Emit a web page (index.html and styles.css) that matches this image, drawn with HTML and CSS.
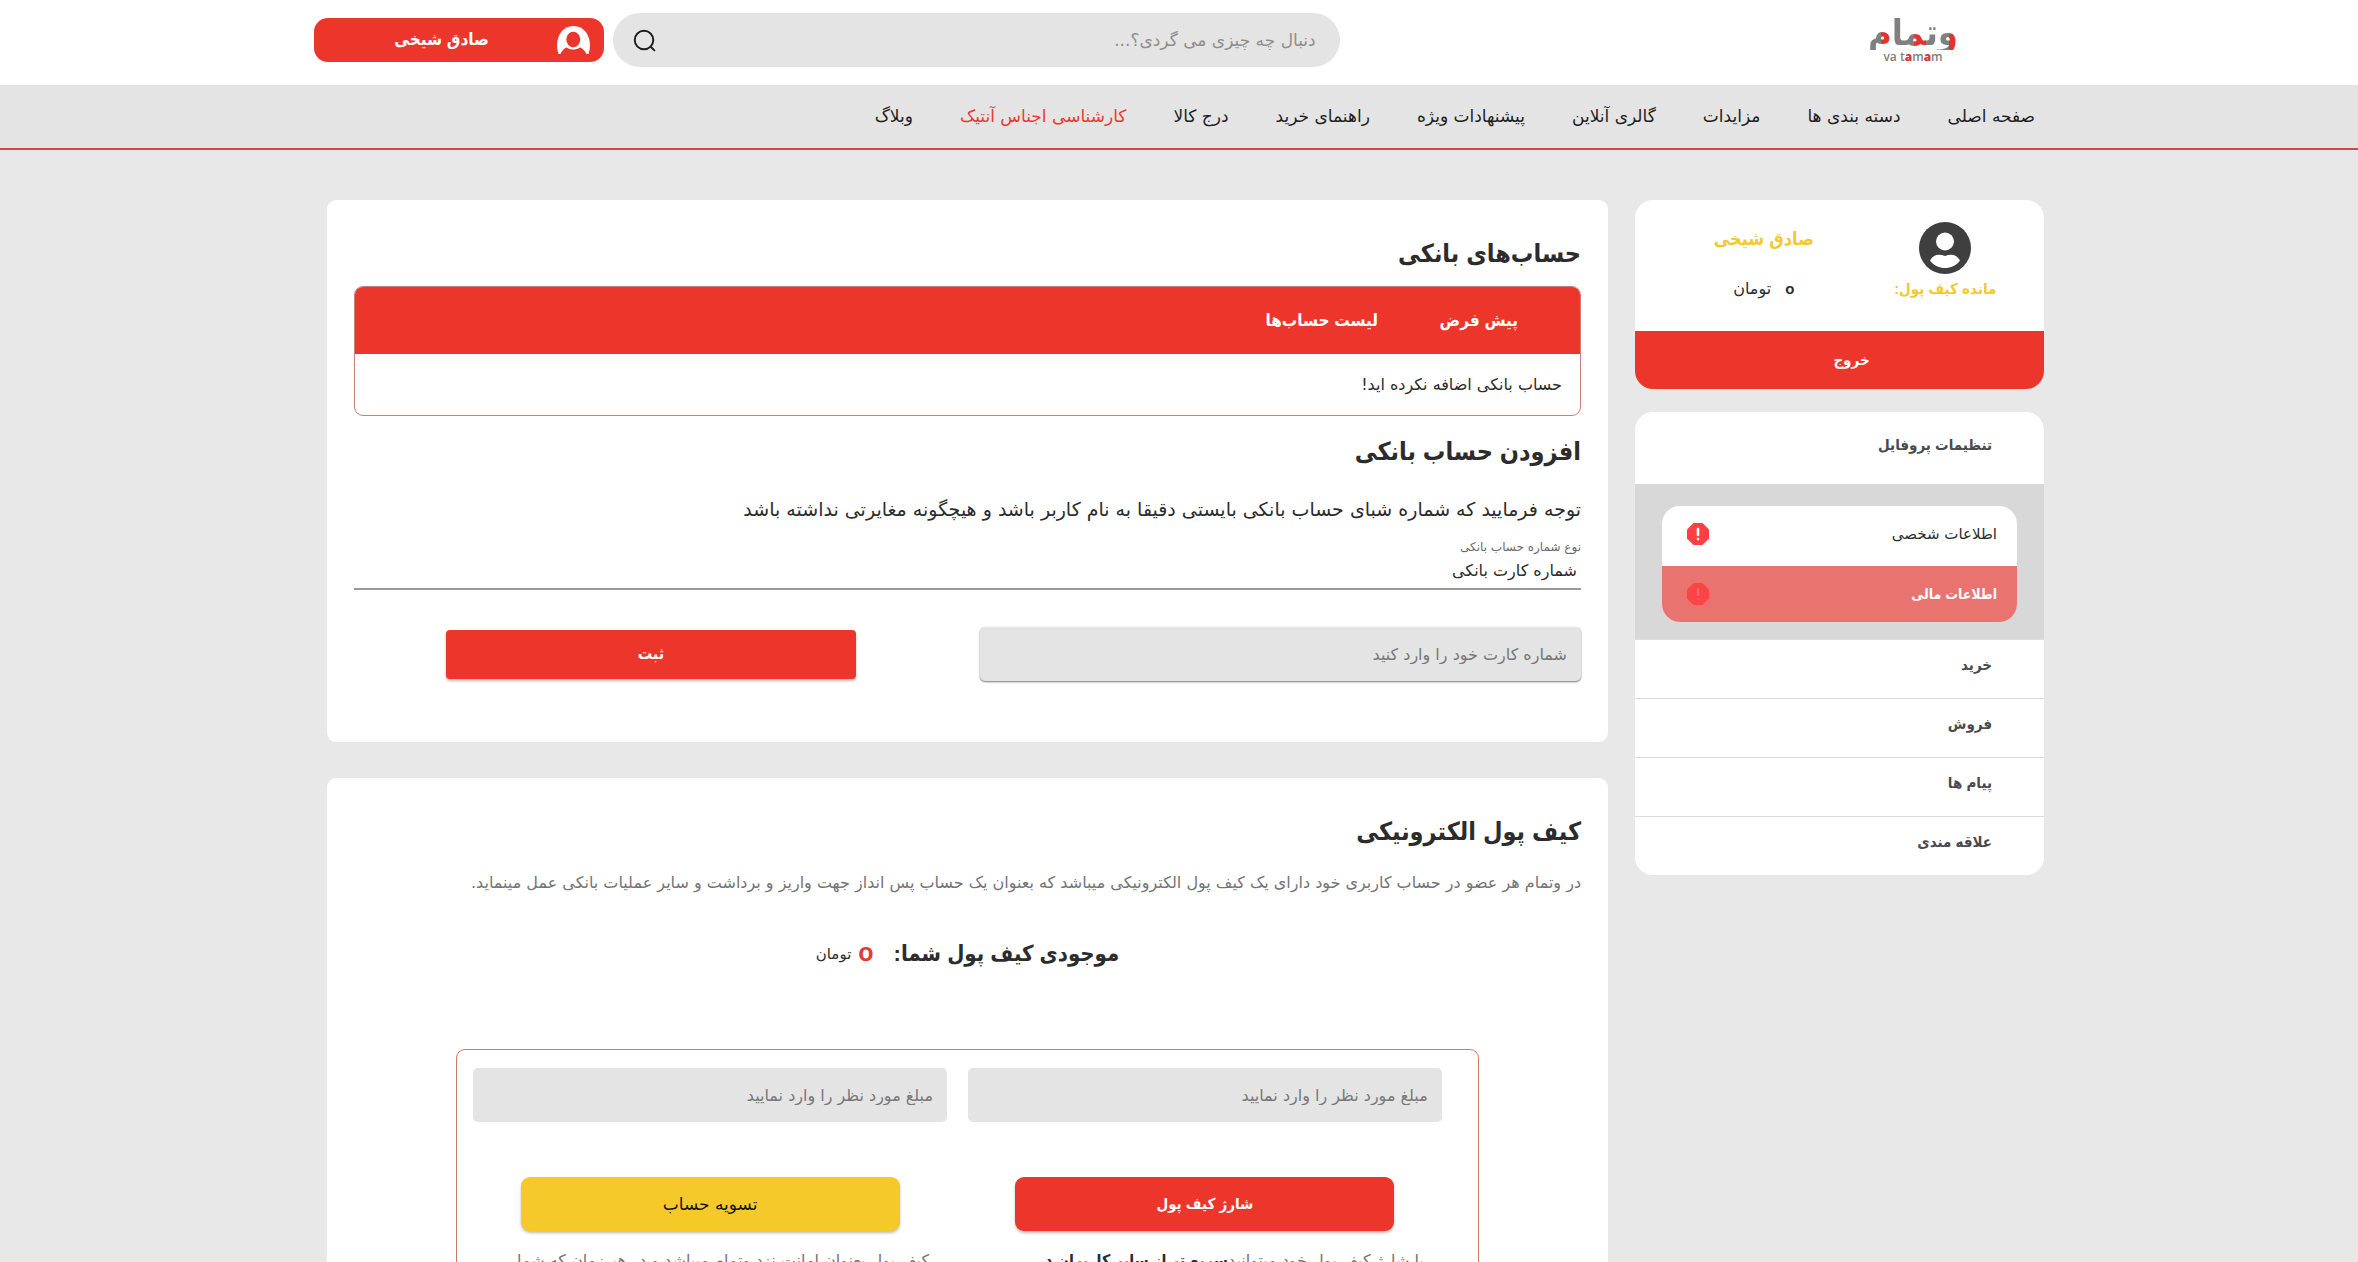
FILE: index.html
```html
<!DOCTYPE html>
<html lang="fa" dir="rtl">
<head>
<meta charset="utf-8">
<meta name="viewport" content="width=device-width, initial-scale=1">
<title>وتمام</title>
<link rel="stylesheet" href="styles.css">
</head>
<body>
<header class="topbar">
  <div class="container topbar-inner">
    <a class="logo" href="#"><span class="logo-fa">وتمام</span><span class="logo-en" dir="ltr">va t<b>a</b>m<b>a</b>m</span></a>
    <form class="search">
      <input type="search" aria-label="جستجو" placeholder="دنبال چه چیزی می گردی؟...">
      <button type="button" aria-label="جستجو"><svg viewBox="0 0 24 24"><circle cx="11.5" cy="11.5" r="9.7"/><path d="M18.5 18.5l3.8 3.8"/></svg></button>
    </form>
    <a class="account" href="#">
      <svg viewBox="0 0 35 29"><path fill="#fff" d="M2.500 28C-2 15 4 0 17.500 0S37 15 32.500 28l-2 0H4.500z"/><ellipse cx="17.300" cy="13.500" rx="7" ry="7.700" fill="#ed362b"/><path fill="#ed362b" d="M4 29C5.500 25.500 8 22 10.500 21.500c4.500 2.800 9 2.800 13.500 0C26.500 22 29.500 25.500 31 29z"/></svg>
      <span>صادق شیخی</span>
    </a>
  </div>
</header>
<nav class="nav">
  <div class="container nav-inner">
    <a href="#">صفحه اصلی</a>
    <a href="#">دسته بندی ها</a>
    <a href="#">مزایدات</a>
    <a href="#">گالری آنلاین</a>
    <a href="#">پیشنهادات ویژه</a>
    <a href="#">راهنمای خرید</a>
    <a href="#">درج کالا</a>
    <a class="hot" href="#">کارشناسی اجناس آنتیک</a>
    <a href="#">وبلاگ</a>
  </div>
</nav>
<div class="container page">
  <aside class="sidebar">
    <section class="user-card">
      <div class="user-info">
        <svg class="avatar" viewBox="0 0 52 52"><circle cx="26" cy="26" r="26" fill="#3f3f3f"/><circle cx="26" cy="19.500" r="9" fill="#fff"/><path fill="#fff" d="M11 38.500c4-6.500 9-6.500 15-4.500 6-2 11-2 15 4.500C37 44 31.500 46 26 46s-11-2-15-7.500z"/></svg>
        <strong class="user-name">صادق شیخی</strong>
        <strong class="wallet-label">مانده کیف پول:</strong>
        <span class="wallet-value"><b>o</b>تومان</span>
      </div>
      <button class="logout" type="button">خروج</button>
    </section>
    <nav class="menu" aria-label="پروفایل">
      <a class="menu-head" href="#">تنظیمات پروفایل</a>
      <div class="submenu">
        <div class="submenu-box">
          <a href="#"><span>اطلاعات شخصی</span><svg viewBox="0 0 22 22"><path fill="#ff3f42" d="M6.500 0h9L22 6.500v9L15.500 22h-9L0 15.500v-9z"/><path stroke="#fff" stroke-width="2.600" stroke-linecap="round" d="M11 6v6M11 16v.1"/></svg></a>
          <a class="active" href="#"><span>اطلاعات مالی</span><svg viewBox="0 0 22 22"><path fill="#ff4447" d="M6.500 0h9L22 6.500v9L15.500 22h-9L0 15.500v-9z"/><path stroke="#ea716c" stroke-width="2" stroke-linecap="round" d="M11 6v6M11 16v.1"/></svg></a>
        </div>
      </div>
      <a class="menu-row" href="#">خرید</a>
      <a class="menu-row" href="#">فروش</a>
      <a class="menu-row" href="#">پیام ها</a>
      <a class="menu-row" href="#">علاقه مندی</a>
    </nav>
  </aside>
  <main class="content">
    <section class="card">
      <h2>حساب‌های بانکی</h2>
      <div class="table-frame">
        <table>
          <thead><tr><th>پیش فرض</th><th>لیست حساب‌ها</th></tr></thead>
          <tbody><tr><td colspan="2">حساب بانکی اضافه نکرده اید!</td></tr></tbody>
        </table>
      </div>
      <h2 class="second">افزودن حساب بانکی</h2>
      <p class="notice">توجه فرمایید که شماره شبای حساب بانکی بایستی دقیقا به نام کاربر باشد و هیچگونه مغایرتی نداشته باشد</p>
      <div class="field">
        <label for="kind">نوع شماره حساب بانکی</label>
        <select id="kind"><option>شماره کارت بانکی</option></select>
      </div>
      <form class="add-form">
        <input class="box-input raised" type="text" aria-label="شماره کارت" placeholder="شماره کارت خود را وارد کنید">
        <div class="submit-cell"><button class="submit" type="button">ثبت</button></div>
      </form>
    </section>
    <section class="card">
      <h2>کیف پول الکترونیکی</h2>
      <p class="lead">در وتمام هر عضو در حساب کاربری خود دارای یک کیف پول الکترونیکی میباشد که بعنوان یک حساب پس انداز جهت واریز و برداشت و سایر عملیات بانکی عمل مینماید.</p>
      <p class="balance"><strong>موجودی کیف پول شما:</strong><b>o</b><span>تومان</span></p>
      <div class="wallet">
        <form class="wallet-col">
          <input class="box-input" type="text" aria-label="مبلغ شارژ" placeholder="مبلغ مورد نظر را وارد نمایید">
          <button class="wallet-btn charge" type="button">شارژ کیف پول</button>
          <p>با شارژ کیف پول خود میتوانید<strong>سریع تر از سایر کاربران در</strong></p>
        </form>
        <form class="wallet-col">
          <input class="box-input" type="text" aria-label="مبلغ تسویه" placeholder="مبلغ مورد نظر را وارد نمایید">
          <button class="wallet-btn settle" type="button">تسویه حساب</button>
          <p>کیف پول بعنوان امانت نزد وتمام میباشد و در هر زمان که شما</p>
        </form>
      </div>
    </section>
  </main>
</div>
</body>
</html>
```
FILE: styles.css
```css
:root {
  --red: #ed362b;
  --field: #e4e4e4;
  --yellow: #f3c92d;
  --bold: "Liberation Sans", "DejaVu Sans Condensed", sans-serif;
}
* { box-sizing: border-box; }
body {
  margin: 0;
  min-height: 100vh;
  background: #e8e8e8;
  color: #2c2c2c;
  font: 16px/24px "DejaVu Sans", sans-serif;
}
a { color: inherit; text-decoration: none; }
button, input, select { font: inherit; color: inherit; border: 0; margin: 0; }
button { cursor: pointer; }
h2, p { margin: 0; }
strong, b, h2, th { font-family: var(--bold); }
.container { width: 100%; max-width: 1762px; margin: 0 auto; padding: 0 16px; }

/* top bar */
.topbar { background: #fff; }
.topbar-inner { display: flex; align-items: center; height: 85px; padding-bottom: 5px; }
.logo { display: flex; flex-direction: column; align-items: center; width: 90px; margin-inline-start: 86px; }
.logo-fa {
  font: bold 36px/34px var(--bold);
  color: transparent;
  background: linear-gradient(90deg, #808080 14%, #e0352f 14% 28%, #808080 28% 51%, #e0352f 51% 64%, #808080 64% 90%, #e0352f 90%);
  -webkit-background-clip: text;
  background-clip: text;
}
.logo-en { font: 600 12px/14px "Open Sans", sans-serif; color: #808080; }
.logo-en b { font-family: inherit; color: #e0352f; }
.search { display: flex; align-items: center; flex: 0 0 42%; height: 54px; margin-inline-start: auto; margin-inline-end: 9px; padding: 0 22px 0 20px; border-radius: 27px; background: var(--field); }
.search input { flex: 1; min-width: 0; background: none; font-size: 17px; outline: none; }
.search input::placeholder, .raised::placeholder { color: #8e8e8e; opacity: 1; }
.search button { display: flex; padding: 0; background: none; }
.search svg { width: 23px; height: 23px; fill: none; stroke: #1e1e1e; stroke-width: 2; stroke-linecap: round; }
.account { display: flex; align-items: center; width: 290px; height: 44px; padding: 0 13px; border-radius: 14px; background: var(--red); color: #fff; font: bold 17px/24px var(--bold); }
.account svg { width: 35px; height: 29px; }
.account span { flex: 1; text-align: center; }

/* main navigation */
.nav { background: var(--field); border-bottom: 2px solid #d9453e; }
.nav-inner { display: flex; flex-wrap: wrap; gap: 0 47px; padding-inline-start: 25px; font-size: 17px; line-height: 63px; color: #1e1e1e; }
.nav .hot { color: #e9392f; }

/* page */
.page { display: grid; grid-template-columns: 409fr 1281fr; gap: 27px; align-items: start; padding: 50px 16px 0 29px; }
.sidebar { display: grid; gap: 23px; }
.user-card, .menu { border-radius: 18px; background: #fff; overflow: hidden; }
.user-info { display: grid; grid-template-columns: 1fr 1fr; justify-items: center; align-items: center; height: 131px; padding: 20px 8px 28px 38px; }
.avatar { width: 52px; height: 52px; }
.user-name, .wallet-label { color: var(--yellow); }
.wallet-label { font-size: 15px; }
.user-name { font-size: 18px; align-self: start; padding-top: 7px; }
.wallet-value b { margin-inline-end: 14px; font-size: 15px; }
.logout { display: block; width: 100%; height: 58px; padding: 0 0 0 24px; background: var(--red); color: #fff; font: bold 15px/24px var(--bold); }
.menu-head, .menu-row { display: block; padding-inline-start: 52px; font: bold 15px/24px var(--bold); color: #4a4a4c; }
.menu-head { padding-top: 21px; padding-bottom: 27px; }
.submenu { padding: 22px 27px 17px; background: #d8d8d8; }
.submenu-box { border-radius: 18px; overflow: hidden; background: #fff; }
.submenu-box a { display: flex; justify-content: space-between; align-items: center; height: 60px; padding: 0 20px 4px 25px; font-size: 15px; }
.submenu-box .active { height: 56px; background: #e9746f; color: #fff; font: bold 14px/24px var(--bold); padding-bottom: 0; }
.submenu-box svg { width: 22px; height: 22px; fill: none; }
.menu-row { padding-top: 13px; padding-bottom: 21px; border-top: 1px solid #dcdcdc; }

/* cards */
.content { display: grid; gap: 36px; min-width: 0; }
.card { padding: 36px 27px 61px; border-radius: 9px; background: #fff; }
h2 { font-size: 25px; line-height: 34px; }
.table-frame { margin-top: 16px; border: 1px solid #cb7f7b; border-radius: 9px; overflow: hidden; }
table { width: 100%; border-collapse: collapse; }
thead { background: var(--red); color: #fff; }
th { padding: 0; height: 67px; font-size: 17px; text-align: right; }
th:first-child { width: 202px; padding-inline-start: 62px; }
td { padding: 0 18px; height: 61px; }
.second { margin-top: 18px; }
.notice { margin-top: 27px; font-size: 19px; line-height: 28px; }
.field { display: flex; flex-direction: column; margin-top: 14px; border-bottom: 2px solid #999; }
.field label { font-size: 12px; line-height: 20px; color: #6a6a6a; }
.field select { appearance: none; width: 100%; height: 31px; padding: 0 4px 4px; background: none; }
.add-form { display: grid; grid-template-columns: 49fr 51fr; align-items: center; margin-top: 37px; }
.box-input { width: 100%; height: 54px; padding: 0 14px; border-radius: 5px; background: var(--field); }
.box-input::placeholder { color: #777; opacity: 1; }
.raised { box-shadow: 0 1px 2px #0008; }
.submit-cell { display: flex; justify-content: center; padding-inline-start: 32px; }
.submit { width: 69%; height: 49px; border-radius: 4px; background: var(--red); color: #fff; font: bold 16px/24px var(--bold); box-shadow: 0 2px 3px #0004; }
.lead { margin-top: 23px; line-height: 24px; color: #747474; }
.balance { display: flex; justify-content: center; align-items: center; margin-top: 45px; line-height: 24px; }
.balance strong { font-size: 22px; }
.balance b { margin: 0 20px 4px 7px; font-size: 25px; color: #df3d36; }
.balance span { font-size: 15px; }
.wallet { display: grid; grid-template-columns: 1fr 1fr; gap: 21px; width: calc(100% * 5 / 6); margin: 81px auto 0; padding: 18px 36px 24px 16px; border: 1px solid #cf7a66; border-radius: 9px; }
.wallet-col { display: flex; flex-direction: column; align-items: center; }
.wallet-btn { width: 80%; height: 54px; margin-top: 55px; border-radius: 9px; box-shadow: 0 2px 3px #0004; }
.charge { background: var(--red); color: #fff; font: bold 15px/24px var(--bold); }
.settle { background: #f6c92a; color: #141414; font-size: 17px; }
.wallet-col p { align-self: stretch; margin-top: 17px; padding: 0 18px; color: #747474; line-height: 26px; }
.wallet-col strong { color: #2c2c2c; }
```
